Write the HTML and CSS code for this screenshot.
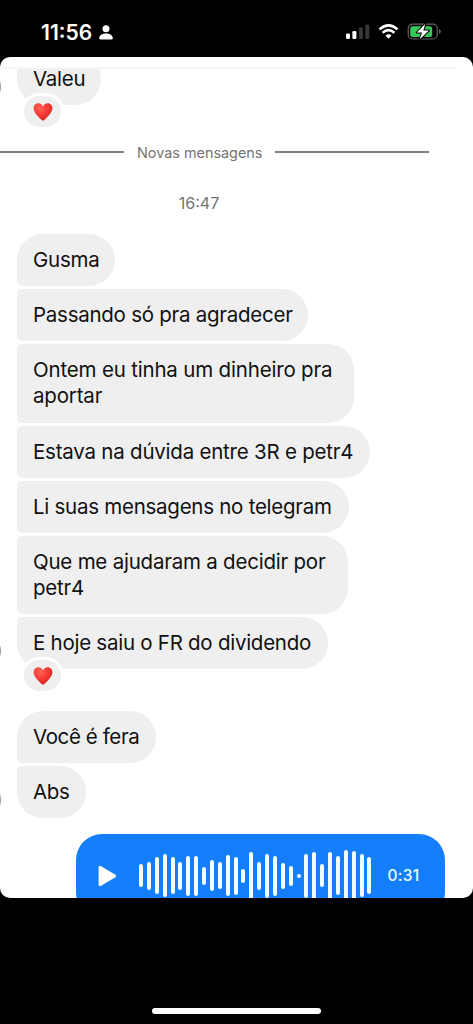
FILE: index.html
```html
<!DOCTYPE html>
<html lang="pt-BR">
<head>
<meta charset="utf-8">
<meta name="viewport" content="width=device-width">
<title>Mensagens</title>
<link rel="stylesheet" href="styles.css">
</head>
<body>
<svg class="defs" aria-hidden="true">
  <defs>
    <radialGradient id="heartFill" cx=".35" cy=".28" r=".75">
      <stop offset="0" stop-color="#ff6258"/><stop offset=".55" stop-color="#f53a32"/><stop offset="1" stop-color="#cf2420"/>
    </radialGradient>
    <symbol id="heart" viewBox="0 0 20 18"><path fill="url(#heartFill)" d="M10 3.6C9 1.2 7.3.2 5.4.2 2.6.2.6 2.4.6 5.3c0 4.3 4.2 8 8.2 11.8.8.8 1.600.8 2.400 0 4-3.800 8.200-7.500 8.200-11.800 0-2.900-2-5.100-4.800-5.100C12.700.2 11 1.200 10 3.600Z"/></symbol>
  </defs>
</svg>
<header class="status">
  <div class="clock"><span>11:56</span>
    <svg width="14" height="15" viewBox="0 0 14 15" fill="#fff"><circle cx="7" cy="3.700" r="3.500"/><path d="M.2 13.300C.2 10.300 3.200 8.600 7 8.600s6.800 1.700 6.800 4.700c0 .7-.4 1.100-1.200 1.100H1.400c-.8 0-1.200-.4-1.200-1.100Z"/></svg>
  </div>
  <svg class="indicators" width="96" height="18" viewBox="0 0 96 18">
    <g fill="#fff"><rect x="0" y="10.500" width="4" height="5.500" rx="1.200"/><rect x="6.400" y="8" width="4" height="8" rx="1.200"/></g>
    <g fill="#373737"><rect x="12.900" y="4.500" width="4" height="11.500" rx="1.200"/><rect x="19.300" y="1.500" width="4" height="14.500" rx="1.200"/></g>
    <g fill="none" stroke="#fff" stroke-width="2.600"><path d="M33.500 6.400Q42.500-1.600 51.500 6.400"/><path d="M36.600 9.700Q42.500 4.600 48.400 9.700"/></g>
    <path fill="#fff" d="M39.500 12.400Q42.500 10 45.500 12.400L42.500 15.700Z"/>
    <rect x="62.200" y="1.200" width="29.100" height="14.800" rx="4.500" fill="none" stroke="#626262" stroke-width="1.200"/>
    <rect x="64.200" y="3.200" width="22" height="10.800" rx="2.500" fill="#36c759"/>
    <path d="M93 6v5q1.800-.7 1.800-2.500T93 6Z" fill="#626262"/>
    <path d="M79.300.8 70.800 9.600h5.300l-2.500 6.900 9.300-9h-5.600Z" fill="#fff" stroke="#000" stroke-width="2" paint-order="stroke" stroke-linejoin="round"/>
  </svg>
</header>
<main class="sheet">
  <div class="rule"></div>
  <section class="chat">
    <div class="group previous">
      <p class="bubble last w-valeu">Valeu</p>
      <span class="avatar"></span>
      <span class="reaction"><svg width="20" height="18"><use href="#heart"/></svg></span>
    </div>
    <div class="divider"><i></i><span>Novas mensagens</span><i></i></div>
    <time class="time">16:47</time>
    <div class="group main">
      <p class="bubble first w-gusma">Gusma</p>
      <p class="bubble w-passando">Passando só pra agradecer</p>
      <p class="bubble w-ontem">Ontem eu tinha um dinheiro pra<br>aportar</p>
      <p class="bubble w-estava">Estava na dúvida entre 3R e petr4</p>
      <p class="bubble w-li">Li suas mensagens no telegram</p>
      <p class="bubble w-que">Que me ajudaram a decidir por<br>petr4</p>
      <p class="bubble last w-hoje">E hoje saiu o FR do dividendo</p>
      <span class="avatar"></span>
      <span class="reaction"><svg width="20" height="18"><use href="#heart"/></svg></span>
    </div>
    <div class="group closing">
      <p class="bubble first w-voce">Você é fera</p>
      <p class="bubble last w-abs">Abs</p>
      <span class="avatar"></span>
    </div>
    <div class="audio">
      <svg class="play" width="19" height="22" viewBox="0 0 19 22"><path d="M2 2.200v17.600L16.700 11Z" fill="#fff" stroke="#fff" stroke-width="2.800" stroke-linejoin="round"/></svg>
      <div class="wave">
        <i style="height:23px"></i><i style="height:28px"></i><i style="height:37px"></i><i style="height:43px"></i><i style="height:37px"></i><i style="height:28px"></i><i style="height:40px"></i><i style="height:40px"></i><i style="height:18px"></i><i style="height:31px"></i><i style="height:27px"></i><i style="height:41px"></i><i style="height:38px"></i><i style="height:14px"></i><i style="height:48px"></i><i style="height:28px"></i><i style="height:44px"></i><i style="height:40px"></i><i style="height:26px"></i><i style="height:20px"></i><i style="height:4px"></i><i style="height:44px"></i><i style="height:47px"></i><i style="height:23px"></i><i style="height:47px"></i><i style="height:39px"></i><i style="height:52px"></i><i style="height:50px"></i><i style="height:43px"></i><i style="height:37px"></i>
      </div>
      <span class="duration">0:31</span>
    </div>
  </section>
</main>
<footer class="home"><span></span></footer>
</body>
</html>
```
FILE: styles.css
```css
* { box-sizing: border-box; }
body { margin: 0; width: 473px; height: 1024px; overflow: hidden; display: flex; flex-direction: column; background: #000; font-family: Inter, "Liberation Sans", sans-serif; }
.defs { position: absolute; width: 0; height: 0; }
.status { height: 57px; flex: none; display: flex; justify-content: space-between; padding: 20px 31px 0 41px; }
.clock { display: flex; gap: 7px; height: 24px; align-items: center; color: #fff; font-size: 21px; font-weight: 600; letter-spacing: 0; }
.clock svg { margin-top: 1px; }
.indicators { margin-top: 3px; }
.sheet { height: 841px; flex: none; background: #fff; border-radius: 10px; overflow: hidden; display: flex; flex-direction: column; padding-top: 10px; }
.rule { height: 2px; width: 456px; background: #f6f6f6; flex: none; }
.chat { flex: 1; min-height: 0; overflow: hidden; display: flex; flex-direction: column; }
.group { position: relative; display: flex; flex-direction: column; align-items: flex-start; gap: 3.1px; padding-left: 17px; flex: none; }
/* The oldest bubble is scrolled partly under the top of the sheet. */
.previous { margin-top: -16px; }
.previous .bubble { height: 52px; width: 84px; }
.bubble { margin: 0; padding: 13px 0 13px 16px; line-height: 26.1px; font-size: 20.5px; letter-spacing: -.26px; color: #111; background: #efefef; border-radius: 5px 26px 26px 5px; white-space: nowrap; }
.bubble.first { border-top-left-radius: 26px; }
.bubble.last { border-bottom-left-radius: 26px; }
.w-gusma { width: 98px; }
.w-passando { width: 291px; }
.w-ontem { width: 337px; letter-spacing: -.18px; }
.w-estava { width: 353px; letter-spacing: -.22px; }
.w-li { width: 332px; }
.w-que { width: 331px; letter-spacing: -.22px; }
.w-hoje { width: 311px; }
.w-voce { width: 139px; letter-spacing: -.4px; }
.w-abs { width: 69px; letter-spacing: -.4px; }
.reaction { position: absolute; left: 21px; bottom: -25px; width: 43px; height: 37px; border: 3px solid #fff; border-radius: 19px; background: #efefef; display: flex; align-items: center; justify-content: center; }
.avatar { position: absolute; left: -29px; bottom: 3px; width: 30px; height: 30px; border-radius: 50%; background: #999; }
.divider { display: flex; align-items: center; gap: 13px; height: 20px; width: 429px; margin-top: 37px; color: #737373; font-size: 14.4px; flex: none; }
.divider i { height: 1.5px; background: #808080; }
.divider i:first-child { width: 124px; }
.divider i:last-child { flex: 1; }
.time { width: 398px; margin-top: 30px; height: 22px; line-height: 22px; text-align: center; color: #737373; font-size: 16px; flex: none; }
.main { margin-top: 20px; }
.closing { margin-top: 41.3px; }
.audio { flex: none; width: 369px; height: 84px; margin: 16px 0 0 76px; border-radius: 26px; background: #157efb; display: flex; align-items: center; padding-left: 22px; color: #e8ffff; }
.wave { display: flex; align-items: center; justify-content: space-between; width: 232.5px; margin-left: 22px; }
.wave i { width: 4px; border-radius: 2px; background: #f1fdff; }
.duration { margin-left: 16px; font-size: 15.5px; font-weight: 500; letter-spacing: .3px; }
.home { display: flex; justify-content: center; padding-top: 110px; }
.home span { width: 169px; height: 6px; border-radius: 3px; background: #fff; }
```
